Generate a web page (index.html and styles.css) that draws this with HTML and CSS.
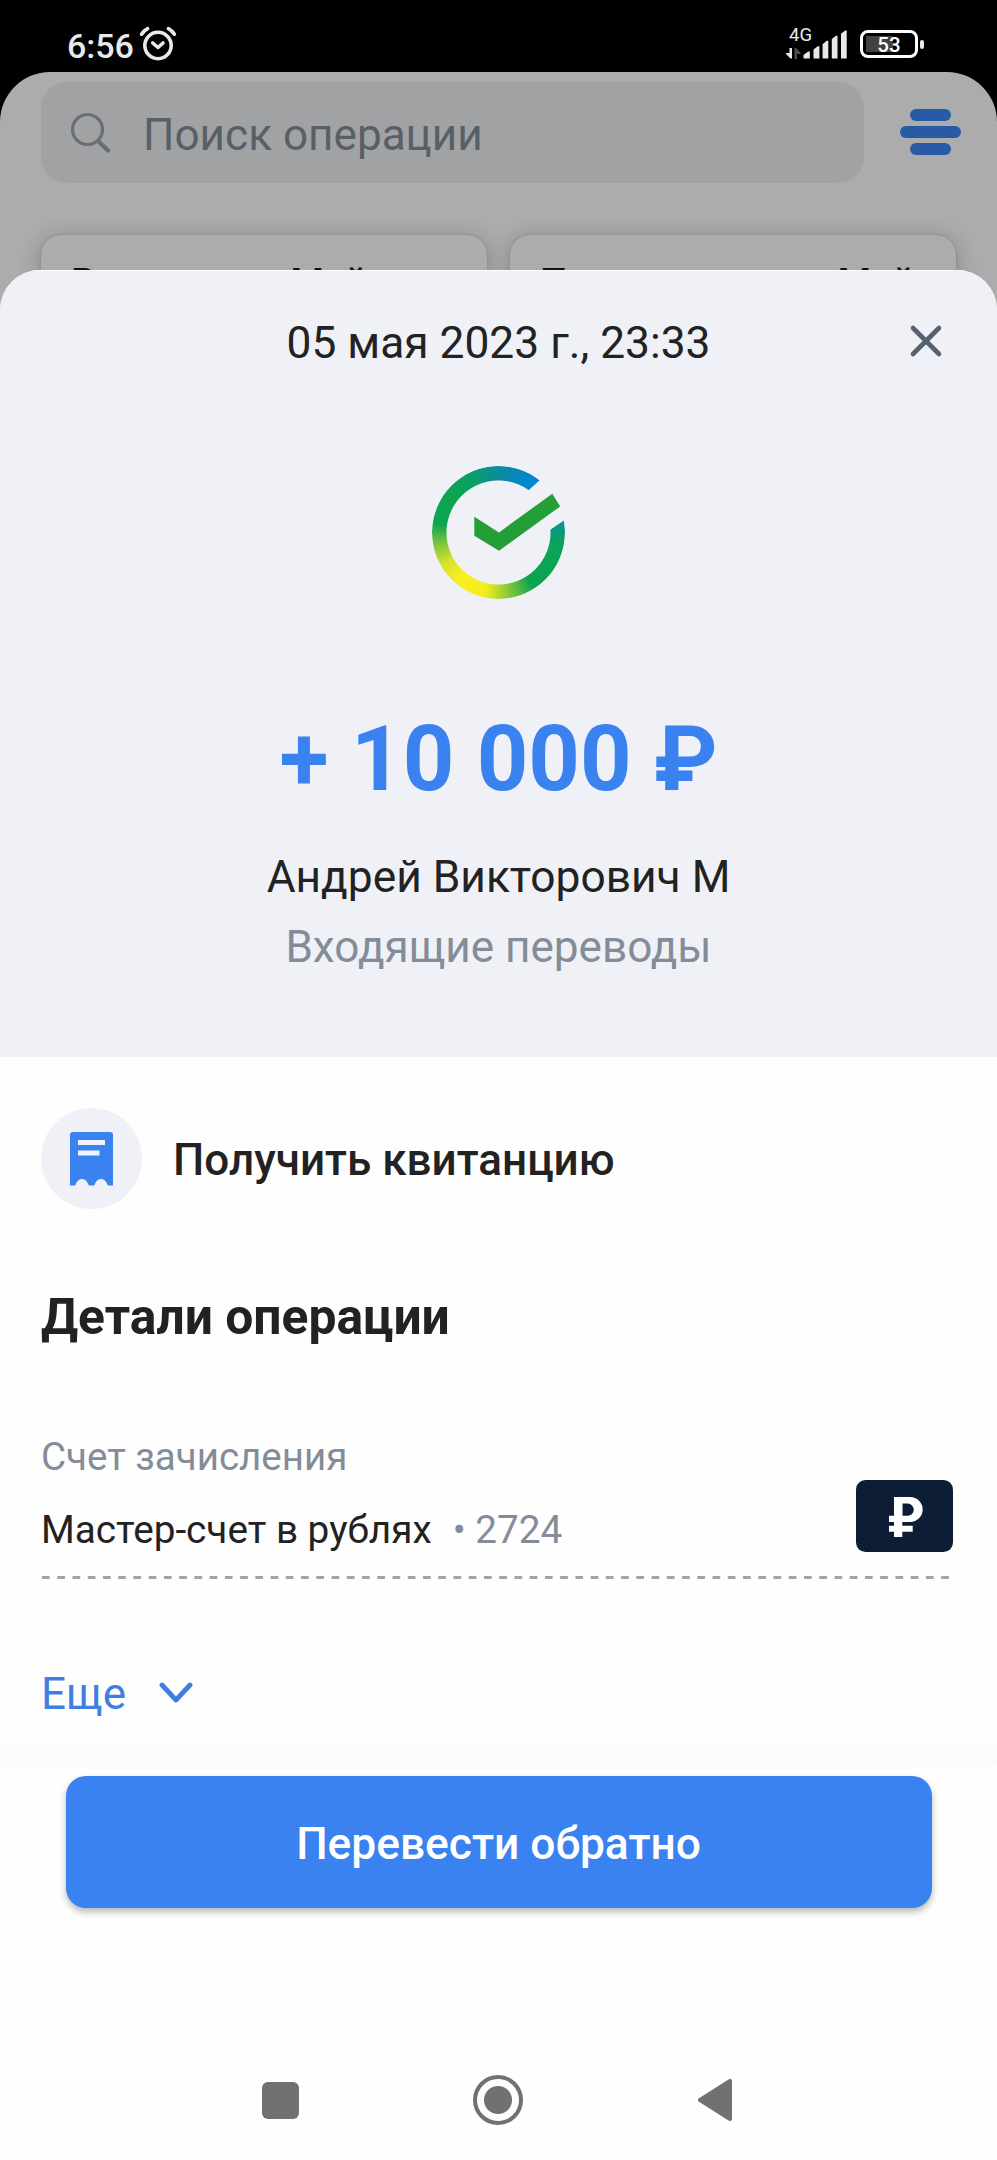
FILE: index.html
```html
<!DOCTYPE html>
<html lang="ru">
<head>
<meta charset="utf-8">
<title>Детали операции</title>
<link rel="stylesheet" href="styles.css">
</head>
<body>
<div class="phone">
  <header class="status">
    <span class="clock">6:56</span>
    <svg class="alarm" width="38" height="36" viewBox="0 0 38 36" fill="none" stroke="#e9e9e9" stroke-linecap="round" stroke-linejoin="round">
      <circle cx="19" cy="19.500" r="13.200" stroke-width="3.600"/>
      <path d="M13.700 17l5.300 4.500 5-4.500" stroke-width="3.600"/>
      <path d="M2.600 8.200Q5 4.500 8.600 2.600M29.400 2.600Q33 4.500 35.400 8.200" stroke-width="3.600"/>
    </svg>
    <div class="network">
      <span class="net-type">4G</span>
      <svg width="15" height="11" viewBox="0 0 15 11"><path d="M3.500 0H6v10.500H4.500L0 6V5h3.500z" fill="#e9e9e9"/><path d="M8.500 11V0H10l4.500 4.500V6H11v5z" fill="#4d4d4d"/></svg>
    </div>
    <svg class="signal" width="45" height="29" viewBox="0 0 45 29" fill="#e9e9e9">
      <path d="M.5 28.500V25l4.700-3.500h1.600v7zM10.500 28.500V19.500l4.300-3.300h1.600v12.300zM19.600 28.500V14.200l4.200-3.400h1.500v17.700zM28.800 28.500V9L33 5.700h1.500v22.800zM38 28.500V3.800L42.200.5h1.500v28z"/>
    </svg>
    <div class="battery"><div class="cell"><span>53</span></div><i class="tip"></i></div>
  </header>

  <section class="history">
    <div class="search-row">
      <div class="search">
        <svg width="42" height="42" viewBox="0 0 42 42" fill="none" stroke="#6a6e73" stroke-width="3.200" stroke-linecap="round"><circle cx="17.500" cy="17.500" r="15"/><path d="M28.500 29.500l9.500 9" stroke-width="4.400"/></svg>
        <span>Поиск операции</span>
      </div>
      <div class="filter"><i></i><i class="wide"></i><i></i></div>
    </div>
    <div class="cards">
      <div class="card">Расходы за Май</div>
      <div class="card">Поступления за Май</div>
    </div>
  </section>

  <main class="sheet">
    <section class="summary">
      <div class="date-row">
        <span></span>
        <span class="date">05 мая 2023 г., 23:33</span>
        <svg class="close" width="34" height="34" viewBox="0 0 34 34" stroke="#566272" stroke-width="4.600" stroke-linecap="round"><path d="M4 4l26 26M30 4L4 30"/></svg>
      </div>
      <div class="logo"><div class="ring"></div>
        <svg class="tick" width="134" height="134" viewBox="0 0 134 134"><path d="M42.300 50.700L67 66.400 120.300 27.700 128.200 40.400 67 84.700 42.300 69.700z" fill="#249f38"/></svg>
      </div>
      <div class="amount">+ 10 000 ₽</div>
      <div class="name">Андрей Викторович М</div>
      <div class="kind">Входящие переводы</div>
    </section>

    <section class="details">
      <div class="receipt">
        <div class="round">
          <svg width="43" height="54" viewBox="0 0 43 54"><path d="M3 0h37q3 0 3 3v50.500h-4.500c-.5 0-1-.5-1.300-1.500-1.600-3.300-3.500-5-6.200-5s-4.600 1.700-6.200 5c-.3 1-.8 1.500-1.300 1.500h-4c-.5 0-1-.5-1.300-1.500-1.600-3.300-3.500-5-6.200-5s-4.600 1.700-6.200 5c-.3 1-.8 1.500-1.300 1.500H0V3q0-3 3-3z" fill="#3b82f1"/><path d="M8 8h27v5H8zM8 18.500h21.500v5H8z" fill="#eef4fd"/></svg>
        </div>
        <span>Получить квитанцию</span>
      </div>
      <h2>Детали операции</h2>
      <div class="label">Счет зачисления</div>
      <div class="account">
        <span class="acc-name">Мастер-счет в рублях</span>
        <span class="acc-num">• 2724</span>
        <svg class="currency" width="97" height="72" viewBox="0 0 97 72">
          <rect width="97" height="72" rx="9.500" fill="#0d1d35"/>
          <g fill="#fff">
            <path fill-rule="evenodd" d="M38 17h16.200a12.500 12.500 0 0 1 0 25H38zM46.300 23.600v12.200h5.400a6.100 6.100 0 0 0 0-12.200z"/>
            <path d="M38 17h8.300v40H38zM33 35.700h8V42h-8zM33 45.700h23.700v6H33z"/>
          </g>
        </svg>
      </div>
      <svg class="dashes" width="913" height="3" viewBox="0 0 913 3"><path d="M1 1.500h909" stroke="#a0a3a9" stroke-width="3" stroke-dasharray="7.700 7.540"/></svg>
      <div class="more"><span>Еще</span>
        <svg width="34" height="22" viewBox="0 0 34 22" fill="none" stroke="#3f7fe2" stroke-width="4.800" stroke-linecap="round" stroke-linejoin="round"><path d="M3 3l14 15L31 3"/></svg>
      </div>
    </section>

    <button class="return">Перевести обратно</button>
  </main>

  <nav class="nav">
    <i class="recent"></i>
    <i class="home"></i>
    <svg class="back" width="34" height="42" viewBox="0 0 34 42"><path d="M2 21L32 2v38z" fill="#717171" stroke="#717171" stroke-width="4" stroke-linejoin="round"/></svg>
  </nav>
</div>
</body>
</html>
```

FILE: styles.css
```css
* { box-sizing: border-box; }
body { margin: 0; background: #000; font-family: Roboto, "Liberation Sans", sans-serif; color: #222; }
svg { display: block; flex: none; }
span { white-space: nowrap; }
.phone { width: 997px; height: 2160px; display: flex; flex-direction: column; overflow: hidden; }

.status { height: 72px; flex: none; display: flex; align-items: flex-start; padding-left: 67px; color: #e9e9e9; }
.clock { width: 67px; margin-top: 26px; font-size: 34px; line-height: 40px; font-weight: 500; }
.alarm { margin: 26px 0 0 5px; }
.network { margin: 25px 0 0 609px; width: 17px; flex: none; display: flex; flex-direction: column; gap: 2px; }
.net-type { font-size: 18.500px; line-height: 21px; padding-left: 3px; }
.signal { margin-top: 30px; }
.battery { display: flex; align-items: center; gap: 2px; margin: 30px 0 0 12px; }
.cell { width: 58px; height: 28px; border: 3px solid #fff; border-radius: 8px; padding: 3px; font-size: 20.500px; font-weight: 500; line-height: 18px; text-align: center; color: #fff; background: linear-gradient(90deg, #424242 0 27px, transparent 27px) 3px 3px / 46px 16px no-repeat; }
.tip { width: 4px; height: 9px; border-radius: 2px; background: #e9e9e9; }

.history { height: 248px; flex: none; background: #acacac; border-radius: 50px 50px 0 0; padding: 10px 36px 0 41px; overflow: hidden; }
.search-row { display: flex; align-items: center; justify-content: space-between; }
.search { width: 823px; height: 101px; border-radius: 26px; background: #a1a2a4; display: flex; align-items: center; gap: 31px; padding-left: 29px; font-size: 44.100px; color: #595f67; }
.search span { padding-top: 5px; }
.filter { width: 61px; display: flex; flex-direction: column; align-items: center; gap: 5px; padding-bottom: 1px; }
.filter i { width: 41px; height: 12px; border-radius: 6px; background: #285aa6; }
.filter .wide { width: 61px; }
.cards { display: flex; gap: 23px; margin-top: 52px; }
.card { width: 446px; height: 180px; border-radius: 20px; background: #acacac; box-shadow: 0 3px 22px rgba(0,0,0,.24), 0 0 2px rgba(0,0,0,.2); padding: 26px 0 0 30px; font-size: 38.600px; line-height: 44px; font-weight: 500; color: #111; }

.sheet { margin-top: -50px; flex: none; height: 1782px; background: #fefefe; border-radius: 40px 40px 0 0; position: relative; display: flex; flex-direction: column; overflow: hidden; }
.summary { height: 787px; flex: none; background: #eff1f6; display: flex; flex-direction: column; align-items: center; text-align: center; border-top: 1px solid #fafbfc; }
.date-row { width: 100%; height: 52px; margin-top: 46px; padding: 0 54px; display: grid; grid-template-columns: 34px 1fr 34px; align-items: center; font-size: 44.300px; line-height: 52px; }
.close { margin-top: -5px; }
.logo { margin-top: 97px; width: 134px; height: 134px; position: relative; }
.ring { width: 133px; height: 133px; border-radius: 50%; background: conic-gradient(#0c8b9c 0deg, #0087cd 28deg, #0087cd 60deg, #0a9688 84deg, #0aa558 104deg, #0aa44f 147deg, #7ac43c 168deg, #f2ec20 192deg, #faf01e 218deg, #d8e32a 240deg, #75c341 260deg, #0ca54f 278deg, #0aa550 315deg, #0b9c70 338deg, #0c8b9c 360deg); -webkit-mask: radial-gradient(circle, transparent 51.500px, #000 52.500px); mask: radial-gradient(circle, transparent 51.500px, #000 52.500px); clip-path: polygon(0 0, 124px 0, 97px 24.300px, 88px 42px, 110px 69.500px, 118.300px 64px, 134px 53.500px, 134px 134px, 0 134px); }
.tick { position: absolute; left: 0; top: 0; }
.amount { margin-top: 105px; font-size: 90px; line-height: 110px; font-weight: 700; color: #3b82f1; white-space: pre; }
.name { margin-top: 32px; font-size: 44.300px; line-height: 60px; }
.kind { margin-top: 10px; font-size: 44.100px; line-height: 60px; color: #838c98; }

.details { height: 709px; flex: none; padding: 51px 42px 0 41px; background: linear-gradient(#fefefe 665px, #fbfbfb 709px); }
.receipt { display: flex; align-items: center; gap: 31px; font-size: 44.050px; font-weight: 500; line-height: 52px; }
.receipt span { padding-top: 3px; }
.round { width: 101px; height: 101px; border-radius: 50%; background: #eff1f6; display: flex; align-items: center; justify-content: center; }
h2 { margin: 78px 0 0; font-size: 49.800px; line-height: 60px; font-weight: 700; }
.label { margin-top: 87px; font-size: 38.500px; line-height: 46px; color: #838c98; }
.account { height: 72px; display: flex; align-items: flex-start; font-size: 38.700px; line-height: 46px; }
.account span { margin-top: 27px; }
.acc-num { margin-left: 21px; color: #838c98; }
.currency { margin: 0 2px 0 auto; }
.dashes { margin-top: 24px; }
.more { margin-top: 87px; display: flex; align-items: center; gap: 33px; font-size: 44px; line-height: 56px; color: #3f7fe2; }
.more svg { margin-top: -2px; }
.return { margin: 10px 65.500px 0; height: 132px; flex: none; border: 0; border-radius: 20px; background: #3b82f1; color: #fff; font: 500 44.300px/52px Roboto, sans-serif; box-shadow: 0 4px 7px rgba(0,0,0,.28); padding: 4px 0 0; }

.nav { height: 108px; flex: none; background: #fefefe; display: flex; align-items: center; padding: 0 0 12px 262px; }
.recent { width: 37px; height: 37px; border-radius: 6px; background: #717171; }
.home { width: 50px; height: 50px; margin-left: 174px; border: 4px solid #717171; border-radius: 50%; background: radial-gradient(circle, #717171 13.500px, transparent 14.500px); }
.back { margin-left: 175px; }
```
